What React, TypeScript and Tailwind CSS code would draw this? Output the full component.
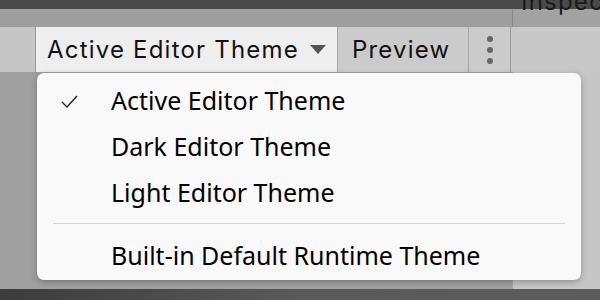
import React from "react";

const menuFont = { fontFamily: '"Noto Sans", "Open Sans", sans-serif' };
const uiFont = { fontFamily: 'Inter, "Noto Sans", sans-serif' };

export default function App() {
  return (
    <div className="relative w-[600px] h-[300px] overflow-hidden flex flex-col bg-[#a0a0a0]" style={uiFont}>
      {/* top header */}
      <div className="relative h-[27px] flex flex-col">
        <div className="h-[9px] bg-[#4a4a4a]" />
        <div className="flex-1 flex">
          <div className="w-[512px] bg-[#9e9e9e]" />
          <div className="flex-1 bg-[#a2a2a2] border-l border-[#8a8a8a]" />
        </div>
        <div className="absolute left-[521px] top-[-12px] text-[24px] leading-[28px] tracking-[1.2px] text-[#1a1a1a] whitespace-nowrap">Inspector</div>
      </div>
      {/* tab row */}
      <div className="h-[45px] flex bg-[#c8c8c8] text-[24px] tracking-[1.2px] text-[#111]">
        <div className="w-[36px] bg-[#c6c6c6] border-r border-[#9a9a9a]" />
        <div className="w-[302px] bg-[#eeeeee] flex items-center pl-[11px] border-r border-[#a4a4a4]">
          <span className="whitespace-nowrap">Active Editor Theme</span>
          <svg className="ml-[11px] shrink-0" width="16" height="10" viewBox="0 0 16 10">
            <polygon points="0,0 16,0 8,9" fill="#555" />
          </svg>
        </div>
        <div className="w-[131px] bg-[#cbcbcb] flex items-center pl-[14px] border-r border-[#a4a4a4]">
          <span>Preview</span>
        </div>
        <div className="w-[42px] bg-[#cbcbcb] flex flex-col items-center justify-center gap-[5px] border-r border-[#9a9a9a]">
          <div className="w-[6px] h-[6px] rounded-full bg-[#666]" />
          <div className="w-[6px] h-[6px] rounded-full bg-[#666]" />
          <div className="w-[6px] h-[6px] rounded-full bg-[#666]" />
        </div>
        <div className="flex-1 bg-[#c8c8c8]" />
      </div>
      {/* body */}
      <div className="flex-1 flex">
        <div className="w-[512px] bg-[#a0a0a0]" />
        <div className="flex-1 bg-[#c6c6c6] border-l border-[#a8a8a8]" />
      </div>
      {/* bottom dark bar */}
      <div className="h-[11px] bg-gradient-to-r from-[#3c3c3c] via-[#5a5a5a] to-[#5c5c5c]" />

      {/* dropdown menu */}
      <div
        className="absolute left-[37px] top-[73px] w-[544px] h-[207px] rounded-[7px] bg-[#f9f9f9] shadow-[0_2px_6px_rgba(0,0,0,0.28)] pt-[5px] text-[25px] text-black"
        style={menuFont}
      >
        <div className="h-[46px] flex items-center">
          <div className="w-[74px] flex justify-start pl-[24px]">
            <svg width="17" height="13" viewBox="0 0 17 13">
              <polyline points="1,7 6,12 16,1" fill="none" stroke="#222" strokeWidth="1.4" />
            </svg>
          </div>
          <span>Active Editor Theme</span>
        </div>
        <div className="h-[46px] flex items-center pl-[74px]">
          <span>Dark Editor Theme</span>
        </div>
        <div className="h-[46px] flex items-center pl-[74px]">
          <span>Light Editor Theme</span>
        </div>
        <div className="h-[17px] pt-[7px] mx-[16px]">
          <div className="h-px bg-[#d6d6d6]" />
        </div>
        <div className="h-[46px] flex items-center pl-[74px]">
          <span>Built-in Default Runtime Theme</span>
        </div>
      </div>
    </div>
  );
}
